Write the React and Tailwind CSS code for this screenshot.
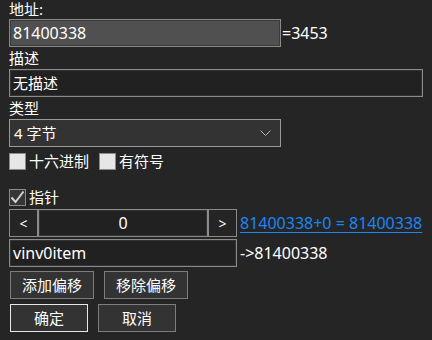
import React from "react";

const font = {
  fontFamily: '"Noto Sans", "Noto Sans CJK SC", sans-serif',
};

const Check = ({ checked, label, className = "" }) => (
  <div className={"flex items-center h-[18px] " + className}>
    <div
      className={
        "w-[17px] h-[17px] border border-[#8a8a8a] flex items-center justify-center " +
        (checked ? "bg-[#363636]" : "bg-[#e6e6e6]")
      }
    >
      {checked && (
        <svg width="15" height="15" viewBox="0 0 15 15">
          <path d="M1.5 7.5 L5.5 12 L13.5 1.5" fill="none" stroke="#d4d4d4" strokeWidth="2" />
        </svg>
      )}
    </div>
    <span className="ml-[3px] text-[15px] leading-[18px]">{label}</span>
  </div>
);

const Btn = ({ children, w, primary }) => (
  <button
    className={
      "h-[28px] bg-[#333333] border text-[15px] leading-none flex items-center justify-center " +
      w +
      (primary ? " border-[#e8e8e8]" : " border-[#7d7d7d]")
    }
  >
    {children}
  </button>
);

export default function App() {
  return (
    <div style={font} className="w-[432px] h-[340px] bg-[#252525] text-white pl-[9px] overflow-hidden">
      {/* 地址 */}
      <div className="h-[19px] text-[15px] leading-[19px]">地址:</div>
      <div className="flex items-center">
        <div className="w-[272px] h-[28px] bg-[#505050] border border-[#8a8a8a] shadow-[inset_0_0_0_1px_#3a3a3a] flex items-center pl-[3px] text-[16px]">
          81400338
        </div>
        <span className="ml-[1px] text-[16px]">=3453</span>
      </div>

      {/* 描述 */}
      <div className="h-[22px] text-[15px] leading-[22px]">描述</div>
      <div className="w-[414px] h-[28px] bg-[#212121] border border-[#8a8a8a] shadow-[inset_0_0_0_1px_#333] flex items-center pl-[3px] text-[15px]">
        无描述
      </div>

      {/* 类型 */}
      <div className="h-[22px] text-[15px] leading-[22px]">类型</div>
      <div className="w-[272px] h-[28px] bg-[#333333] border border-[#9a9a9a] flex items-center justify-between pl-[4px] pr-[9px] text-[15px]">
        <span>4 字节</span>
        <svg width="11" height="7" viewBox="0 0 11 7">
          <path d="M0.5 0.5 L5.5 5.5 L10.5 0.5" fill="none" stroke="#b5b5b5" strokeWidth="1" />
        </svg>
      </div>

      <div className="flex mt-[5px]">
        <Check label="十六进制" />
        <Check label="有符号" className="ml-[10px]" />
      </div>

      <Check checked label="指针" className="mt-[18px]" />

      {/* offset row */}
      <div className="flex items-center mt-[3px]">
        <div className="w-[29px] h-[28px] border border-[#8a8a8a] flex items-center justify-center text-[14px]">&lt;</div>
        <div className="w-[170px] h-[28px] bg-[#212121] border border-[#8a8a8a] shadow-[inset_0_0_0_1px_#333] flex items-center justify-center text-[16px]">
          0
        </div>
        <div className="w-[29px] h-[28px] border border-[#8a8a8a] flex items-center justify-center text-[14px]">&gt;</div>
        <a className="ml-[3px] text-[16px] text-[#1a86f5] underline underline-offset-[3px]">81400338+0 = 81400338</a>
      </div>

      <div className="flex items-center mt-[2px]">
        <div className="w-[228px] h-[28px] bg-[#212121] border border-[#8a8a8a] shadow-[inset_0_0_0_1px_#333] flex items-center pl-[3px] text-[16px]">
          vinv0item
        </div>
        <span className="ml-[3px] text-[16px]">-&gt;81400338</span>
      </div>

      <div className="flex gap-[10px] mt-[4px] pl-[1px]">
        <Btn w="w-[84px]">添加偏移</Btn>
        <Btn w="w-[84px]">移除偏移</Btn>
      </div>
      <div className="flex gap-[10px] mt-[5px] pl-[1px]">
        <Btn w="w-[78px]" primary>确定</Btn>
        <Btn w="w-[78px]">取消</Btn>
      </div>
    </div>
  );
}
